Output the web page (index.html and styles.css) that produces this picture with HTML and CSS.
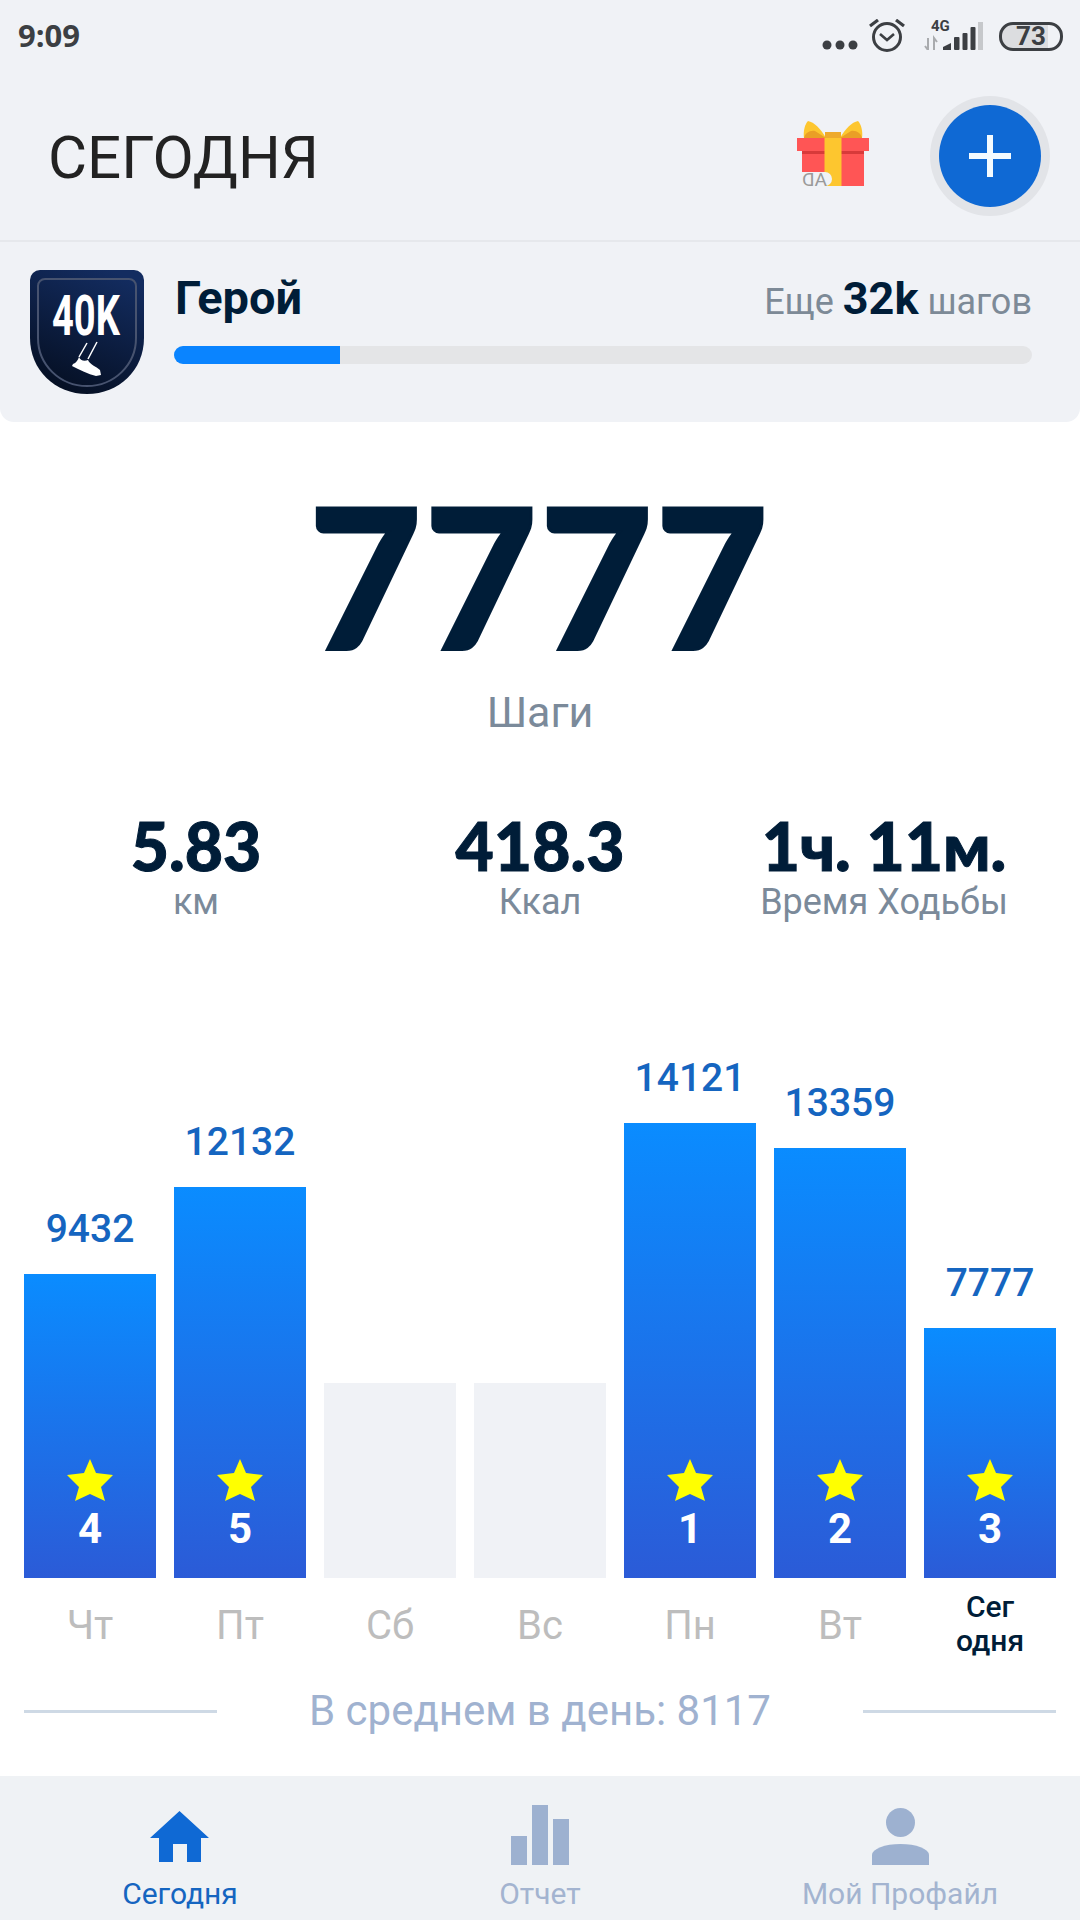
FILE: index.html
```html
<!DOCTYPE html>
<html>
<head>
  <title>Сегодня</title>
  <link rel="stylesheet" href="styles.css">
</head>
<body>
  <div class="top">
    <div class="status">
      <span class="time">9:09</span>
      <div class="status-icons">
        <svg class="dots" width="36" height="10" viewBox="0 0 36 10"><circle cx="5" cy="5" r="4.5"/><circle cx="18" cy="5" r="4.5"/><circle cx="31" cy="5" r="4.5"/></svg>
        <svg class="alarm" width="36" height="36" viewBox="0 0 36 36">
          <circle cx="18" cy="18" r="13.5" fill="none" stroke="#3c3f43" stroke-width="3"/>
          <path d="M11 15l7 6 7-6" fill="none" stroke="#3c3f43" stroke-width="2.6"/>
          <path d="M1 7l8-6M35 7l-8-6" fill="none" stroke="#3c3f43" stroke-width="3.2"/>
        </svg>
        <svg class="signal" width="62" height="36" viewBox="0 0 62 36">
          <text x="10" y="17" class="net">4G</text>
          <path d="M7 24v12l-3-4M13 36V24l3 4" fill="none" stroke="#a9abae" stroke-width="2"/>
          <path d="M22 36v-3l8-4v7z" fill="#3c3f43"/>
          <rect x="33" y="23" width="5.5" height="13" rx="1" fill="#3c3f43"/>
          <rect x="41.5" y="19" width="5" height="17" rx="1" fill="#3c3f43"/>
          <rect x="49.5" y="13" width="5" height="23" rx="1" fill="#3c3f43"/>
          <rect x="57" y="8" width="5" height="28" fill="#c6c8cb"/>
        </svg>
        <div class="battery">73</div>
      </div>
    </div>

    <div class="header">
      <h1>СЕГОДНЯ</h1>
      <svg class="gift" width="74" height="72" viewBox="0 0 74 72">
        <path d="M29 18C24 9 17 2 11 1 8 4 6 11 7 18z" fill="#fdc62f"/>
        <path d="M43 18C48 9 55 2 61 1 64 4 66 11 65 18z" fill="#fdc62f"/>
        <path d="M7 18c1-5 6-8 11-7l11 7zM65 18c-1-5-6-8-11-7l-11 7z" fill="#ea9f26"/>
        <rect x="5" y="31" width="62" height="35" fill="#ff5555"/>
        <rect x="0" y="18" width="72" height="13" fill="#ff5555"/>
        <rect x="5" y="31" width="62" height="3" fill="#d83a3a"/>
        <rect x="27.5" y="18" width="17" height="48" fill="#fdc62f"/>
        <rect x="28" y="12" width="16" height="6" fill="#eeaa2c"/>
        <path d="M4 52h24a7 7 0 0 1 7 7 7 7 0 0 1-7 7H4z" fill="#f0f2f6"/>
        <text class="ad" transform="translate(30 66) scale(-1 1)">AD</text>
      </svg>
      <div class="add-ring"><div class="add">
        <svg width="42" height="42" viewBox="0 0 42 42"><path d="M18 0h6v18h18v6H24v18h-6V24H0v-6h18z" fill="#f4fbff"/></svg>
      </div></div>
    </div>

    <div class="goal">
      <svg class="badge" width="114" height="124" viewBox="0 0 114 124">
        <defs>
          <linearGradient id="shield" x1="0.7" y1="0" x2="0.3" y2="1">
            <stop offset="0" stop-color="#132c60"/>
            <stop offset="1" stop-color="#050f22"/>
          </linearGradient>
        </defs>
        <path d="M10 0h94a10 10 0 0 1 10 10v58c0 32-25 56-57 56S0 100 0 68V10A10 10 0 0 1 10 0z" fill="url(#shield)"/>
        <path d="M15 9h84a7 7 0 0 1 7 7v52c0 27-22 48-49 48S8 95 8 68V16a7 7 0 0 1 7-7z" fill="none" stroke="#47536f" stroke-width="2"/>
        <text class="badge-text" transform="translate(22 65) scale(0.68 1)">40K</text>
        <path d="M57 73l-8 14M67 72l-9 17" fill="none" stroke="#fff" stroke-width="1.5"/>
        <path d="M49 87c1 3 5 5 9 3 2 5 8 6 12 10l1 5-5 1c-8-2-16-6-24-10l1-2c3-1 5-4 6-7z" fill="#fff"/>
      </svg>
      <div class="goal-info">
        <div class="goal-head">
          <span class="rank">Герой</span>
          <span class="remain">Еще <b>32k</b> шагов</span>
        </div>
        <div class="progress"><div class="progress-fill" style="width:166px"></div></div>
      </div>
    </div>
  </div>

  <div class="total">
    <div class="total-num">7777</div>
    <div class="total-label">Шаги</div>
  </div>

  <div class="stats">
    <div class="stat"><div class="stat-num">5.83</div><div class="stat-label">км</div></div>
    <div class="stat"><div class="stat-num">418.3</div><div class="stat-label">Ккал</div></div>
    <div class="stat"><div class="stat-num">1ч. 11м.</div><div class="stat-label">Время Ходьбы</div></div>
  </div>

  <div class="chart">
    <div class="col">
      <div class="val">9432</div>
      <div class="bar" style="height:304px">
        <svg class="star" width="46" height="42" viewBox="0 0 46 42"><polygon points="23,0 29,14 46,16 34,28 38,42 23,35 8,42 12,28 0,16 17,14"/></svg>
        <div class="rank-num">4</div>
      </div>
      <div class="day">Чт</div>
    </div>
    <div class="col">
      <div class="val">12132</div>
      <div class="bar" style="height:391px">
        <svg class="star" width="46" height="42" viewBox="0 0 46 42"><polygon points="23,0 29,14 46,16 34,28 38,42 23,35 8,42 12,28 0,16 17,14"/></svg>
        <div class="rank-num">5</div>
      </div>
      <div class="day">Пт</div>
    </div>
    <div class="col">
      <div class="bar empty"></div>
      <div class="day">Сб</div>
    </div>
    <div class="col">
      <div class="bar empty"></div>
      <div class="day">Вс</div>
    </div>
    <div class="col">
      <div class="val">14121</div>
      <div class="bar" style="height:455px">
        <svg class="star" width="46" height="42" viewBox="0 0 46 42"><polygon points="23,0 29,14 46,16 34,28 38,42 23,35 8,42 12,28 0,16 17,14"/></svg>
        <div class="rank-num">1</div>
      </div>
      <div class="day">Пн</div>
    </div>
    <div class="col">
      <div class="val">13359</div>
      <div class="bar" style="height:430px">
        <svg class="star" width="46" height="42" viewBox="0 0 46 42"><polygon points="23,0 29,14 46,16 34,28 38,42 23,35 8,42 12,28 0,16 17,14"/></svg>
        <div class="rank-num">2</div>
      </div>
      <div class="day">Вт</div>
    </div>
    <div class="col">
      <div class="val">7777</div>
      <div class="bar" style="height:250px">
        <svg class="star" width="46" height="42" viewBox="0 0 46 42"><polygon points="23,0 29,14 46,16 34,28 38,42 23,35 8,42 12,28 0,16 17,14"/></svg>
        <div class="rank-num">3</div>
      </div>
      <div class="day today">Сег<br>одня</div>
    </div>
  </div>

  <div class="average">
    <span class="average-line"></span>
    <span class="average-text">В среднем в день: 8117</span>
    <span class="average-line"></span>
  </div>

  <div class="tabs">
    <div class="tab active">
      <svg width="60" height="60" viewBox="0 0 60 60"><path d="M29.5 6L59 33H51V57H37V39H23V57H9V33H0z"/></svg>
      <div class="tab-label">Сегодня</div>
    </div>
    <div class="tab">
      <svg width="58" height="60" viewBox="0 0 58 60"><rect x="0" y="31" width="16" height="29"/><rect x="21" y="0" width="16" height="60"/><rect x="42" y="14" width="16" height="46"/></svg>
      <div class="tab-label">Отчет</div>
    </div>
    <div class="tab">
      <svg width="57" height="60" viewBox="0 0 57 60"><circle cx="28.5" cy="17.5" r="14.5"/><path d="M0 60V50a28.5 11 0 0 1 57 0V60z"/></svg>
      <div class="tab-label">Мой Профайл</div>
    </div>
  </div>
</body>
</html>
```
FILE: styles.css
```css
body {
  font-family: Roboto, "Liberation Sans", sans-serif;
  margin: 0;
  padding: 0;
  width: 1080px;
  height: 1920px;
  overflow: hidden;
  display: flex;
  flex-direction: column;
  background-color: #fff;
}
.top {
  height: 422px;
  flex-shrink: 0;
  background-color: #f0f2f6;
  border-radius: 0 0 14px 14px;
}
.status {
  height: 72px;
  padding: 0 17px 0 18px;
  display: flex;
  align-items: center;
  justify-content: space-between;
}
.time {
  font-family: "Open Sans", sans-serif;
  font-size: 31px;
  font-weight: 700;
  margin-bottom: 2px;
  color: #3c3f43;
}
.status-icons {
  display: flex;
  align-items: center;
}
.dots {
  fill: #3c3f43;
  margin: 18px 11px 0 0;
}
.alarm {
  margin-top: 2px;
}
.signal {
  margin: 0 16px 8px 16px;
}
.net {
  font-size: 15px;
  font-weight: 700;
  fill: #3c3f43;
}
.battery {
  width: 58px;
  height: 23px;
  line-height: 23px;
  border: 3px solid #3c3f43;
  border-radius: 14px;
  text-align: center;
  font-size: 26px;
  font-weight: 700;
  color: #3c3f43;
  background: linear-gradient(90deg, #dcdde0 80%, transparent 80%);
}
.header {
  height: 168px;
  padding: 0 30px 0 48px;
  display: flex;
  align-items: center;
  border-bottom: 2px solid #e6e8ec;
}
h1 {
  margin: 2px 0 0;
  flex: 1;
  font-size: 60px;
  font-weight: 400;
  color: #222;
}
.gift {
  margin-right: 59px;
}
.ad {
  font-size: 19px;
  fill: #9a9a9a;
}
.add-ring {
  width: 120px;
  height: 120px;
  border-radius: 50%;
  background-color: #e2e4e8;
  display: flex;
  align-items: center;
  justify-content: center;
}
.add {
  width: 102px;
  height: 102px;
  border-radius: 50%;
  background-color: #0f69d4;
  display: flex;
  align-items: center;
  justify-content: center;
}
.goal {
  display: flex;
  padding: 28px 48px 0 30px;
}
.goal-info {
  flex: 1;
  margin-left: 30px;
}
.goal-head {
  display: flex;
  justify-content: space-between;
  align-items: baseline;
  height: 76px;
}
.rank {
  font-size: 47px;
  font-weight: 700;
  color: #001d38;
  margin-left: 1px;
}
.remain {
  font-size: 36px;
  color: #7d8a97;
}
.remain b {
  font-size: 45px;
  color: #001d38;
}
.progress {
  height: 18px;
  border-radius: 9px;
  background-color: #e4e5e7;
}
.progress-fill {
  height: 18px;
  border-radius: 9px 0 0 9px;
  background-color: #0a84ff;
}
.badge-text {
  font-size: 56px;
  font-weight: 700;
  fill: #fff;
}
.total {
  text-align: center;
  padding-top: 36px;
}
.total-num {
  font-family: Lato, sans-serif;
  font-size: 194px;
  font-weight: 900;
  line-height: 232px;
  letter-spacing: 3px;
  color: #001d38;
  -webkit-text-stroke: 3px #001d38;
}
.total-label {
  font-size: 43px;
  line-height: 44px;
  color: #7b8a9a;
}
.stats {
  display: grid;
  grid-template-columns: 344px 344px 344px;
  padding-left: 24px;
  margin-top: 75px;
  text-align: center;
}
.stat-num {
  font-family: Lato, sans-serif;
  font-size: 66px;
  font-weight: 900;
  line-height: 74px;
  color: #001d38;
  -webkit-text-stroke: 1px #001d38;
}
.stat-label {
  font-size: 36px;
  line-height: 38px;
  color: #7b8a9a;
}
.chart {
  height: 620px;
  margin-top: 129px;
  padding-left: 24px;
  display: flex;
  gap: 18px;
}
.col {
  width: 132px;
  display: flex;
  flex-direction: column;
  justify-content: flex-end;
  align-items: center;
}
.val {
  font-size: 39px;
  font-weight: 500;
  line-height: 46px;
  margin-bottom: 22px;
  color: #1565c0;
}
.bar {
  width: 132px;
  height: 195px;
  display: flex;
  flex-direction: column;
  align-items: center;
  justify-content: flex-end;
  background: linear-gradient(180deg, #0a8cff, #2b5bd7);
}
.bar.empty {
  background: #f0f2f6;
}
.star {
  fill: #ffff00;
}
.rank-num {
  font-size: 42px;
  font-weight: 700;
  line-height: 50px;
  margin: 3px 0 24px;
  color: #fff;
}
.day {
  height: 92px;
  padding-top: 26px;
  box-sizing: border-box;
  font-size: 40px;
  line-height: 44px;
  color: #bdbdbd;
}
.day.today {
  padding-top: 12px;
  font-size: 30px;
  font-weight: 500;
  line-height: 34px;
  text-align: center;
  color: #001d38;
}
.average {
  margin-top: 16px;
  padding: 0 24px;
  display: flex;
  align-items: center;
  justify-content: space-between;
}
.average-line {
  width: 193px;
  height: 3px;
  background-color: #ced9e5;
}
.average-text {
  font-size: 42px;
  line-height: 50px;
  color: #a0b2d0;
}
.tabs {
  margin-top: auto;
  height: 144px;
  display: grid;
  grid-template-columns: 360px 360px 360px;
  background-color: #eff2f5;
}
.tab {
  text-align: center;
  padding-top: 29px;
  fill: #9db1d0;
  color: #a3b4d0;
}
.tab svg {
  display: block;
  margin: 0 auto;
}
.tab.active {
  fill: #0f69d4;
  color: #1565c0;
}
.tab-label {
  font-size: 30px;
  line-height: 36px;
  margin-top: 11px;
}
```
